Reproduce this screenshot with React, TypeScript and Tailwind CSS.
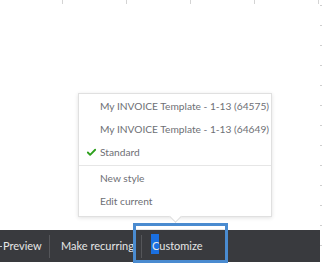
import { Check } from "lucide-react";

const topTicks = [62, 126, 190, 254, 318];
const sideTicks = Array.from({ length: 13 }, (_, i) => 5 + i * 20);

interface MenuItemProps {
  label: string;
  checked?: boolean;
}

function MenuItem({ label, checked }: MenuItemProps) {
  return (
    <div className="flex h-[23px] items-center whitespace-nowrap pl-[21px] text-[10.2px] text-[#6e6f75]">
      {checked ? (
        <Check className="-ml-[14px] mr-[3px] size-[11px] text-[#2ca01c]" strokeWidth={4} />
      ) : null}
      <span>{label}</span>
    </div>
  );
}

function BarItem({ label, selected, width }: { label: string; selected?: boolean; width?: string }) {
  return (
    <span className={`relative whitespace-nowrap ${width ?? ""}`}>
      {selected ? <span className="absolute left-[-1px] top-[-4px] h-[20px] w-[8px] bg-[#1a6fe0]" /> : null}
      <span className="relative">{label}</span>
    </span>
  );
}

export default function App() {
  return (
    <div
      className="relative flex h-[264px] w-[322px] flex-col overflow-hidden bg-white"
      style={{ fontFamily: "Lato, 'Open Sans', sans-serif" }}
    >
      {/* canvas grid marks */}
      {topTicks.map((x) => (
        <div key={x} className="absolute top-0 h-[4px] w-px bg-[#d4d4d4]" style={{ left: x }} />
      ))}
      {sideTicks.map((y) => (
        <div key={y} className="absolute right-0 h-px w-[2px] bg-[#cfcfcf]" style={{ top: y }} />
      ))}

      <div className="relative h-[230px] shrink-0">
        {/* style dropdown */}
        <div className="absolute left-[78px] top-[93px] w-[194px] border border-[#e0e0e0] bg-white pb-[3px] pt-px shadow-[0_1px_4px_rgba(0,0,0,0.12)]">
          <MenuItem label="My INVOICE Template - 1-13 (64575)" />
          <MenuItem label="My INVOICE Template - 1-13 (64649)" />
          <MenuItem label="Standard" checked />
          <div className="my-px border-t border-[#e6e6e6]" />
          <MenuItem label="New style" />
          <MenuItem label="Edit current" />
          <div className="absolute bottom-[-5px] left-[92px] size-[9px] rotate-45 border-b border-r border-[#dcdcdc] bg-white" />
        </div>
      </div>

      <div className="flex h-[32px] w-[320px] shrink-0 items-center bg-[#393a3e] text-[11px] text-[#e6e6e6]">
        <span className="mr-px h-px w-[2px] bg-[#ccc]" />
        <BarItem label="Preview" width="w-[46px]" />
        <span className="h-[23px] w-px bg-[#55565a]" />
        <BarItem label="Make recurring" width="ml-[11px] w-[80px]" />
        <span className="h-[23px] w-px bg-[#55565a]" />
        <BarItem label="Customize" selected width="ml-[10px]" />
      </div>

      {/* focus ring around Customize */}
      <div className="pointer-events-none absolute left-[133px] top-[223px] h-[40px] w-[95px] border-[3px] border-[#4a8bd0]">
        <div className="mt-[3px] h-px bg-[#e9e9e9]" />
      </div>
    </div>
  );
}
